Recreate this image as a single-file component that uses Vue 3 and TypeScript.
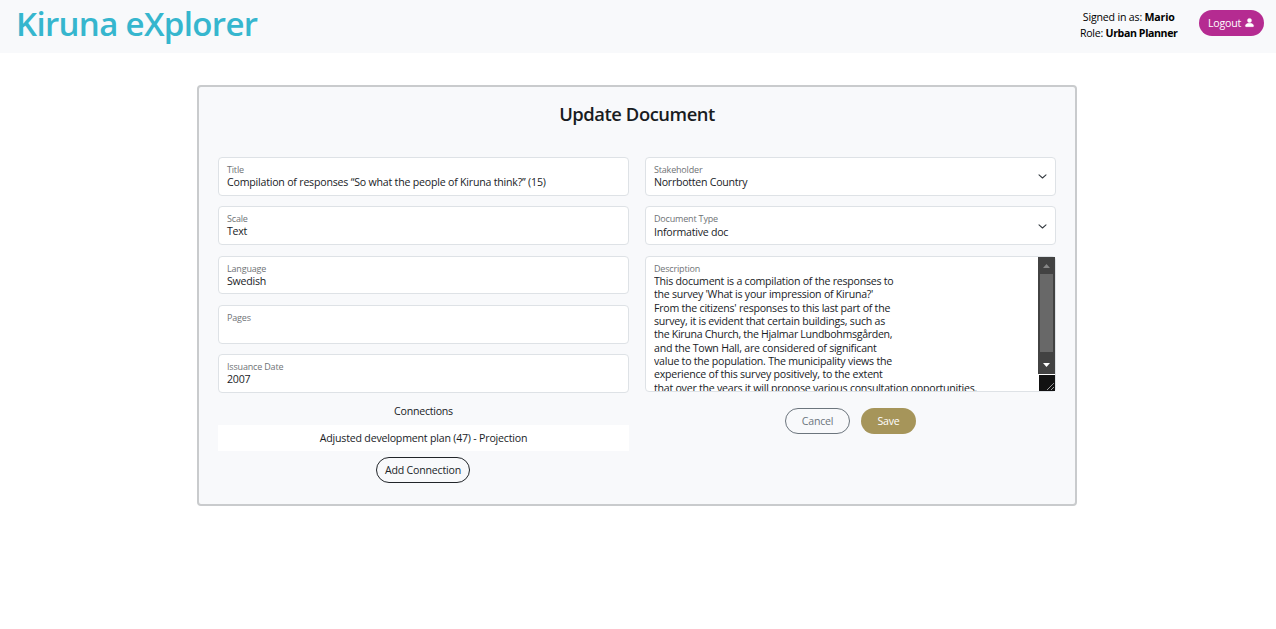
<script setup lang="ts">
interface Field {
  label: string
  value: string
}

const leftFields: Field[] = [
  { label: 'Title', value: 'Compilation of responses “So what the people of Kiruna think?” (15)' },
  { label: 'Scale', value: 'Text' },
  { label: 'Language', value: 'Swedish' },
  { label: 'Pages', value: '' },
  { label: 'Issuance Date', value: '2007' },
]

const selectFields: Field[] = [
  { label: 'Stakeholder', value: 'Norrbotten Country' },
  { label: 'Document Type', value: 'Informative doc' },
]

const description: string[] = [
  'This document is a compilation of the responses to',
  "the survey 'What is your impression of Kiruna?'",
  "From the citizens' responses to this last part of the",
  'survey, it is evident that certain buildings, such as',
  'the Kiruna Church, the Hjalmar Lundbohmsgården,',
  'and the Town Hall, are considered of significant',
  'value to the population. The municipality views the',
  'experience of this survey positively, to the extent',
  'that over the years it will propose various consultation opportunities.',
]
</script>

<template>
  <div class="page">
    <header class="navbar">
      <div class="brand">Kiruna eXplorer</div>
      <div class="session">
        <div class="user">
          <div class="signed">Signed in as: <b>Mario</b></div>
          <div class="role">Role: <b>Urban Planner</b></div>
        </div>
        <button class="btn logout">
          <span>Logout</span>
          <svg class="person" width="11" height="11" viewBox="0 0 16 16" fill="currentColor">
            <path d="M3 14s-1 0-1-1 1-4 6-4 6 3 6 4-1 1-1 1zm5-6a3 3 0 1 0 0-6 3 3 0 0 0 0 6" stroke="currentColor" stroke-width=".7" />
          </svg>
        </button>
      </div>
    </header>

    <main class="card">
      <h1 class="heading">Update Document</h1>
      <div class="columns">
        <section class="column">
          <div v-for="f in leftFields" :key="f.label" class="field">
            <div class="label">{{ f.label }}</div>
            <div class="value">{{ f.value }}</div>
          </div>
          <div class="connections-title">Connections</div>
          <div class="connection">Adjusted development plan (47) - Projection</div>
          <button class="btn add">Add Connection</button>
        </section>

        <section class="column">
          <div v-for="f in selectFields" :key="f.label" class="field select">
            <div>
              <div class="label">{{ f.label }}</div>
              <div class="value">{{ f.value }}</div>
            </div>
            <svg class="chevron" width="9" height="9" viewBox="0 0 9 9">
              <path d="M1 2.8 4.5 6 8 2.8" fill="none" stroke="#343a40" stroke-width="1.05" stroke-linecap="round" stroke-linejoin="round" />
            </svg>
          </div>
          <div class="field area">
            <div class="area-text">
              <div class="label">Description</div>
              <div class="lines">
                <div v-for="line in description" :key="line" class="value line">{{ line }}</div>
              </div>
            </div>
            <div class="scroll">
              <div class="track">
                <svg class="arrow" width="17" height="17"><path d="M5 11h7L8.5 7z" fill="#868686" /></svg>
                <div class="thumb"></div>
                <svg class="arrow" width="17" height="17"><path d="M5 6h7L8.5 10z" fill="#fff" /></svg>
              </div>
              <svg class="grip" width="16" height="16">
                <path d="M8 15 15 8M12 15l3-3" stroke="#c8c8c8" stroke-width="1" stroke-dasharray="1.1 .4" />
              </svg>
            </div>
          </div>
          <div class="actions">
            <button class="btn cancel">Cancel</button>
            <button class="btn save">Save</button>
          </div>
        </section>
      </div>
    </main>
  </div>
</template>

<style>
body {
  background: #fff;
}
</style>

<style scoped>
.page {
  height: 629px;
  overflow: hidden;
  font-family: 'Open Sans', 'Noto Sans', sans-serif;
  font-size: 10.6px;
  letter-spacing: -0.24px;
  color: #191c1f;
}
.page * {
  box-sizing: border-box;
}
.navbar {
  height: 53px;
  padding: 0 12px 0 16px;
  display: flex;
  justify-content: space-between;
  align-items: flex-start;
  background: #f8f9fb;
}
.brand {
  color: #36b6ce;
  font-size: 33px;
  font-weight: 600;
  line-height: 48px;
  letter-spacing: -0.65px;
  white-space: nowrap;
}
.session {
  display: flex;
  gap: 21.5px;
}
.user {
  padding-top: 9px;
  text-align: center;
  line-height: 16px;
  color: #000;
  white-space: nowrap;
}
.user b {
  font-weight: 700;
  letter-spacing: -0.38px;
}
.signed {
  letter-spacing: -0.18px;
}
.signed b {
  letter-spacing: -0.2px;
}
.btn {
  display: flex;
  align-items: center;
  justify-content: center;
  height: 26px;
  padding: 0;
  border: 1px solid transparent;
  border-radius: 13px;
  background: transparent;
  font: inherit;
  letter-spacing: inherit;
  white-space: nowrap;
}
.logout {
  width: 65px;
  margin-top: 10px;
  gap: 3px;
  background: #b52b91;
  color: #fff;
}
.person {
  margin-bottom: 2px;
}
.card {
  box-sizing: border-box;
  width: 880px;
  height: 421px;
  margin: 32px 0 0 197px;
  padding: 0 19px;
  border: 2px solid #c9cbcd;
  border-radius: 4px;
  background: #f8f9fb;
}
.heading {
  margin: 0;
  padding-top: 13px;
  height: 70px;
  font-size: 18.4px;
  line-height: 28px;
  font-weight: 600;
  text-align: center;
  letter-spacing: -0.45px;
}
.columns {
  display: grid;
  grid-template-columns: 411px 411px;
  gap: 16px;
}
.field {
  height: 38.67px;
  margin-bottom: 10.66px;
  padding: 6px 8px 0;
  border: 1px solid #dee2e6;
  border-radius: 4px;
  background: #fff;
}
.label {
  font-size: 9px;
  line-height: 12px;
  letter-spacing: -0.18px;
  color: #6f7376;
}
.value {
  line-height: 13.33px;
  white-space: nowrap;
}
.column .field:first-child .value {
  letter-spacing: -0.205px;
}
.column .select:first-child .value {
  letter-spacing: -0.26px;
}
.select + .select .value {
  padding-top: 0.6px;
}
.select {
  display: flex;
  justify-content: space-between;
}
.chevron {
  margin: 7.6px 0 0;
}
.select + .select .chevron {
  margin-top: 8.6px;
}
.area {
  height: 136px;
  padding: 6px 0 0 8px;
  margin-bottom: 16px;
  display: flex;
  justify-content: space-between;
}
.area-text {
  flex: 1;
  min-width: 0;
  height: 128px;
  overflow: hidden;
}
.lines {
  padding-top: 0.3px;
}
.line:nth-child(5) {
  letter-spacing: -0.31px;
}
.scroll {
  width: 17px;
  height: 134px;
  margin-top: -6px;
  display: flex;
  flex-direction: column;
  align-items: flex-end;
  justify-content: space-between;
  flex: none;
}
.track {
  width: 17px;
  height: 117px;
  background: #424242;
  display: flex;
  flex-direction: column;
}
.arrow {
  display: block;
}
.thumb {
  width: 13px;
  height: 78px;
  margin: 0 2px 5px;
  background: #686868;
}
.grip {
  display: block;
  background: #121212;
}
.connections-title {
  margin-top: -1px;
  height: 22px;
  line-height: 16px;
  text-align: center;
}
.connection {
  height: 26px;
  line-height: 26px;
  background: #fff;
  text-align: center;
  letter-spacing: -0.2px;
}
.add {
  width: 94px;
  margin: 6px 0 0 158px;
  border-color: #212529;
  color: #212529;
  letter-spacing: -0.2px;
}
.actions {
  display: flex;
  justify-content: center;
  gap: 11px;
}
.cancel {
  width: 65px;
  border-color: #6c757d;
  color: #6c757d;
}
.save {
  width: 55px;
  background: #a6955a;
  color: #fff;
}
</style>
